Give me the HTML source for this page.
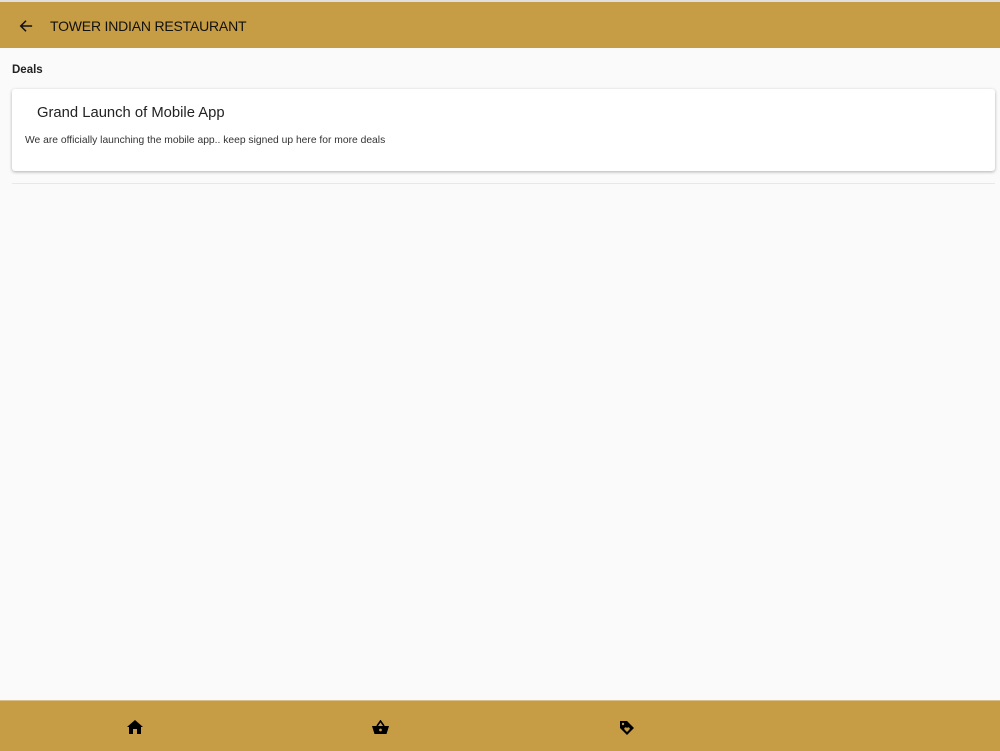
<!DOCTYPE html>
<html><head><style>
body{margin:0;width:1000px;height:750px;background:#fafafa;font-family:"Liberation Sans",sans-serif;position:relative;overflow:hidden}
.hdr{position:absolute;top:0;left:0;width:1000px;height:48px;background:#c69c45;border-top:2px solid #e0e0e0;box-sizing:border-box}
.hdr .t{position:absolute;left:50px;top:16px;font-size:14px;letter-spacing:-0.2px;color:#111}
.hdr svg{position:absolute;left:19px;top:17px}
.deals{position:absolute;left:12px;top:64px;font-size:11.5px;font-weight:bold;color:#222}
.card{position:absolute;left:12px;top:89px;width:983px;height:82px;background:#fff;border-radius:3px;box-shadow:0 1px 3px rgba(0,0,0,.3)}
.card .h{position:absolute;left:25px;top:16px;font-size:14.8px;color:#222}
.card .d{position:absolute;left:13px;top:46px;font-size:10.3px;color:#333}
.line{position:absolute;left:12px;top:183px;width:983px;height:1px;background:#e8e8e8}
.ftr{position:absolute;left:0;top:700px;width:1000px;height:50px;background:#c69c45;border-top:1px solid #d8c08a}
.ftr svg{position:absolute;top:19px}
</style></head><body>
<div class="hdr"><svg width="14" height="14" viewBox="0 0 16 16"><path d="M15 8H3M8 2L2 8l6 6" stroke="#111" stroke-width="1.8" fill="none"/></svg><div class="t">TOWER INDIAN RESTAURANT</div></div>
<div class="deals">Deals</div>
<div class="card"><div class="h">Grand Launch of Mobile App</div><div class="d">We are officially launching the mobile app.. keep signed up here for more deals</div></div>
<div class="line"></div>
<div class="ftr">
<svg style="left:127px" width="16" height="14" viewBox="0 0 16 14"><path d="M8 0L0 7h2v7h4V9h4v5h4V7h2z" fill="#000"/></svg>
<svg style="left:372px" width="17" height="15" viewBox="0 0 17 15"><path d="M5 6L8.5 1 12 6" stroke="#000" stroke-width="1.6" fill="none"/><path d="M0 6h17l-2.5 8h-12z" fill="#000"/><circle cx="8.5" cy="10" r="1.4" fill="#c69c45"/></svg>
<svg style="left:619px" width="16" height="16" viewBox="0 0 16 16"><path d="M1 1h7l7 7-7 7-7-7z" fill="#000"/><circle cx="4" cy="4" r="1.2" fill="#c69c45"/><path d="M8 12l-2.5-2.5a1.3 1.3 0 0 1 2.5-1.5 1.3 1.3 0 0 1 2.5 1.5z" fill="#c69c45"/></svg>
</div>
</body></html>
